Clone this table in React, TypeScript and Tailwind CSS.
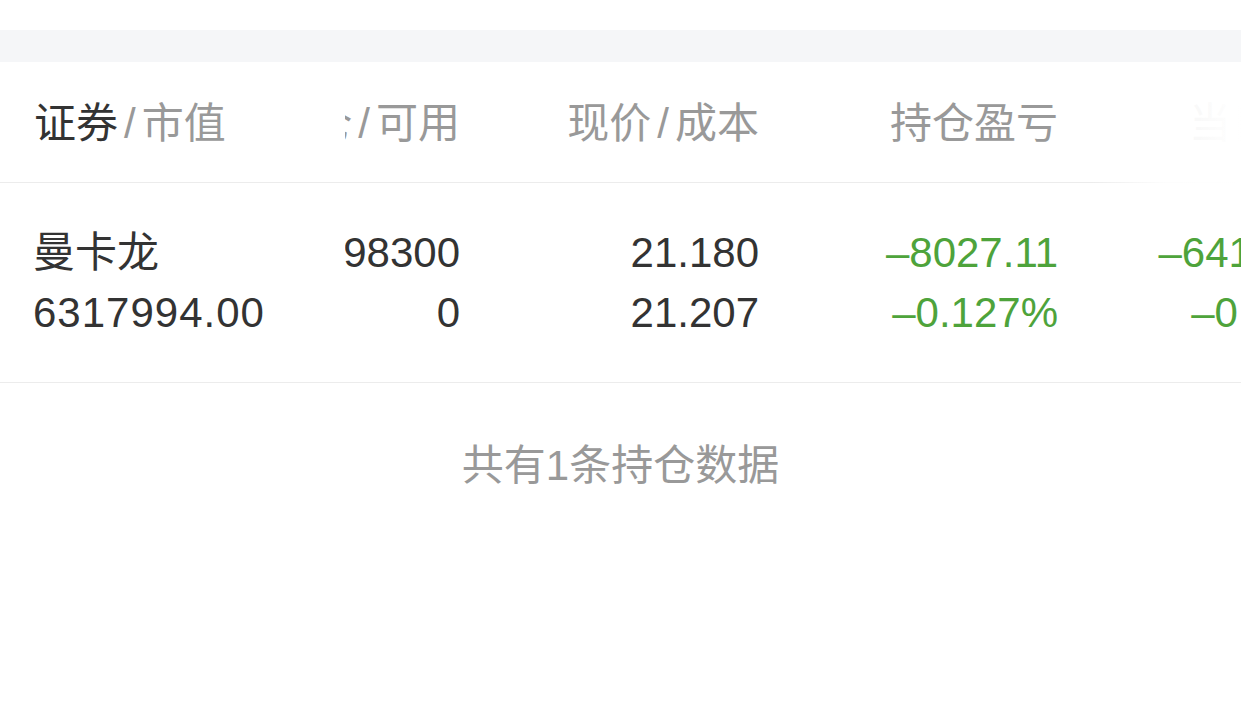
import React from "react";

type Col = { name: string; sub?: string; top: string; bottom: string; tone: "dark" | "green" };

const cols: Col[] = [
  { name: "持仓", sub: "可用", top: "298300", bottom: "0", tone: "dark" },
  { name: "现价", sub: "成本", top: "21.180", bottom: "21.207", tone: "dark" },
  { name: "持仓盈亏", top: "–8027.11", bottom: "–0.127%", tone: "green" },
  { name: "当日盈亏", top: "–6412.508", bottom: "–0.103%", tone: "green" },
];

const font = { fontFamily: '"Liberation Sans", "Noto Sans CJK SC", sans-serif' };

const Slash = () => <span className="px-[6px] font-light">/</span>;

export default function App() {
  return (
    <div className="w-[1241px] h-[719px] bg-white overflow-hidden text-[42px]" style={font}>
      <div className="h-[30px]" />
      <div className="h-[32px] bg-[#f5f6f8]" />

      {/* header */}
      <div className="relative flex h-[121px] pt-[3px] border-b border-[#ececec]">
        <div className="w-[345px] shrink-0 flex items-center pl-[34px] leading-none">
          <span className="text-[#333]">证券</span>
          <span className="text-[#999]">
            <Slash />
            市值
          </span>
        </div>
        <div className="flex-1 overflow-hidden">
          <div className="flex h-full ml-[-184px]">
            {cols.map((c) => (
              <div key={c.name} className="w-[299px] shrink-0 flex items-center justify-end text-[#999] leading-none">
                {c.name}
                {c.sub && (
                  <>
                    <Slash />
                    {c.sub}
                  </>
                )}
              </div>
            ))}
          </div>
        </div>
        <div className="absolute right-0 top-0 bottom-[-1px] w-[150px] bg-gradient-to-r from-white/0 via-white/90 to-white" />
      </div>

      {/* row */}
      <div className="flex h-[200px] border-b border-[#ececec] text-[#333]">
        <div className="w-[345px] shrink-0 flex flex-col justify-center pl-[33px] leading-[60px]">
          <div>曼卡龙</div>
          <div className="tracking-[1px]">6317994.00</div>
        </div>
        <div className="flex-1 overflow-hidden">
          <div className="flex h-full ml-[-184px]">
            {cols.map((c) => (
              <div
                key={c.name}
                className={`w-[299px] shrink-0 flex flex-col justify-center items-end leading-[60px] ${
                  c.tone === "green" ? "text-[#4ea33b]" : "text-[#333]"
                }`}
              >
                <div>{c.top}</div>
                <div>{c.bottom}</div>
              </div>
            ))}
          </div>
        </div>
      </div>

      <div className="flex justify-center pt-[62px] text-[#999] leading-none">共有1条持仓数据</div>
    </div>
  );
}
